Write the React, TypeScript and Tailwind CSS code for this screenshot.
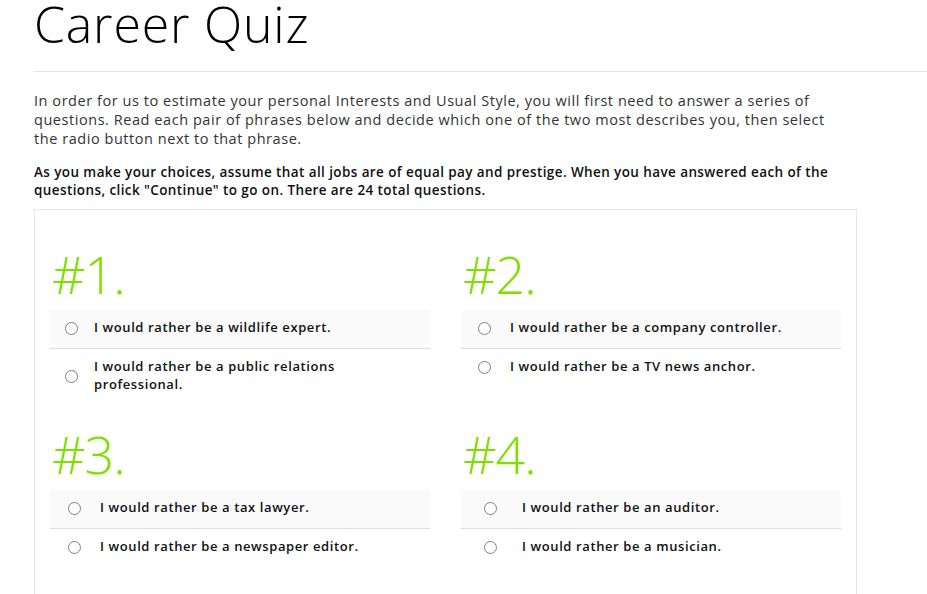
const questions = [
  {
    n: 1,
    pad: "w-[42px]",
    a: "I would rather be a wildlife expert.",
    b: "I would rather be a public relations professional.",
  },
  {
    n: 2,
    pad: "w-[47px]",
    a: "I would rather be a company controller.",
    b: "I would rather be a TV news anchor.",
  },
  {
    n: 3,
    pad: "w-[48px]",
    a: "I would rather be a tax lawyer.",
    b: "I would rather be a newspaper editor.",
  },
  {
    n: 4,
    pad: "w-[59px]",
    a: "I would rather be an auditor.",
    b: "I would rather be a musician.",
  },
];

function Radio() {
  return (
    <span className="block w-[13px] h-[13px] rounded-full border border-[#808080] bg-white" />
  );
}

function Option({ text, pad, shaded }: { text: string; pad: string; shaded?: boolean }) {
  return (
    <div className={`flex items-center pt-[8px] pb-[12px] ${shaded ? "bg-[#fafafa] border-b border-[#dddddd]" : ""}`}>
      <div className={`${pad} shrink-0 flex justify-center mt-[3px]`}>
        <Radio />
      </div>
      <p className="ml-[2px] flex-1 pr-[40px] leading-[18px] text-[13px] font-semibold tracking-[0.6px] text-[#111]">{text}</p>
    </div>
  );
}

export default function App() {
  return (
    <main className="min-h-screen bg-white text-black font-['Open_Sans',sans-serif] overflow-hidden">
      <div className="pl-[34px]">
        <h1 className="text-[50px] leading-[48px] font-light tracking-[0.8px] text-black">Career Quiz</h1>
        <hr className="mt-[23px] border-0 border-t border-[#e5e5e5]" />
        <div className="w-[805px] mt-[19px] tracking-[0.55px]">
          <p className="text-[#333] text-[14.5px] leading-[19px]">
            In order for us to estimate your personal Interests and Usual Style, you will first need to answer a series of
            questions. Read each pair of phrases below and decide which one of the two most describes you, then select
            the radio button next to that phrase.
          </p>
          <p className="mt-[15px] font-semibold text-[#111] text-[13.5px] tracking-[0.4px] leading-[18px]">
            As you make your choices, assume that all jobs are of equal pay and prestige. When you have answered each of the
            questions, click "Continue" to go on. There are 24 total questions.
          </p>
        </div>

        <section className="mt-[10px] w-[823px] border border-[#e5e5e5] px-[15px] pt-[34px] pb-[40px]">
          <div className="grid grid-cols-2 gap-x-[31px] gap-y-[19px]">
            {questions.map((q) => (
              <div key={q.n}>
                <h2 className="text-[52px] leading-[60px] font-light tracking-[-1px] text-[#7fe000] pl-[2px] mb-[6px]">#{q.n}.</h2>
                <Option text={q.a} pad={q.pad} shaded />
                <Option text={q.b} pad={q.pad} />
              </div>
            ))}
          </div>
        </section>
      </div>
    </main>
  );
}
